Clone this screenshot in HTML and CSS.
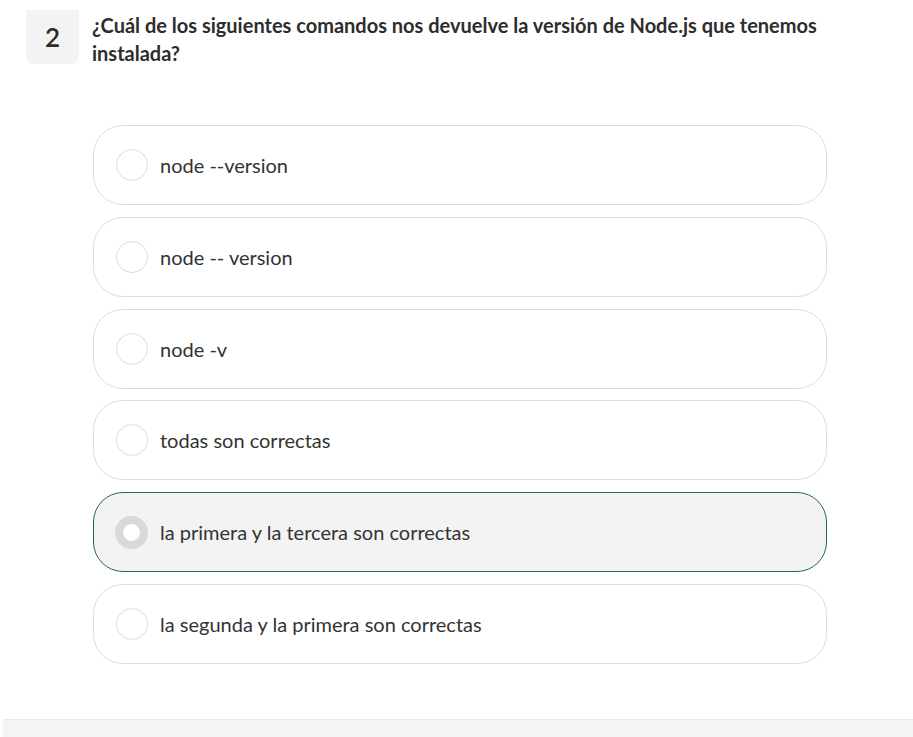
FILE: index.html
```html
<!DOCTYPE html>
<html lang="es">
<head>
<meta charset="utf-8">
<title>Pregunta 2</title>
<link rel="stylesheet" href="styles.css">
</head>
<body>
<div class="question">
  <div class="num">2</div>
  <div class="qtext">¿Cuál de los siguientes comandos nos devuelve la versión de Node.js que tenemos instalada?</div>
</div>
<div class="options">
  <div class="option"><span class="radio"></span><span class="label">node --version</span></div>
  <div class="option"><span class="radio"></span><span class="label">node -- version</span></div>
  <div class="option"><span class="radio"></span><span class="label">node -v</span></div>
  <div class="option"><span class="radio"></span><span class="label">todas son correctas</span></div>
  <div class="option selected"><span class="radio"></span><span class="label">la primera y la tercera son correctas</span></div>
  <div class="option"><span class="radio"></span><span class="label">la segunda y la primera son correctas</span></div>
</div>
<div class="footer-bar"></div>
</body>
</html>
```
FILE: styles.css
```css
html, body {
  margin: 0;
  padding: 0;
  background: #ffffff;
}
body {
  font-family: "Lato", "Noto Sans", "Liberation Sans", sans-serif;
  color: #333333;
  width: 913px;
  height: 737px;
  overflow: hidden;
}
.question {
  display: flex;
  align-items: flex-start;
  padding-left: 26px;
  padding-top: 10px;
}
.num {
  width: 53px;
  height: 54px;
  flex: none;
  background: #f3f3f3;
  border-radius: 0 0 8px 8px;
  display: flex;
  align-items: center;
  justify-content: center;
  font-size: 26px;
  font-weight: 600;
  color: #2b2b2b;
}
.qtext {
  margin-left: 13px;
  width: 750px;
  font-size: 20px;
  font-weight: 700;
  line-height: 28px;
  padding-top: 1px;
  color: #2d2d2d;
}
.options {
  margin-left: 93px;
  margin-top: 58px;
  width: 734px;
  display: flex;
  flex-direction: column;
  gap: 11.8px;
}
.option {
  box-sizing: border-box;
  height: 80px;
  border: 1px solid #dcdcdc;
  border-radius: 30px;
  display: flex;
  align-items: center;
  padding-left: 22px;
  background: #ffffff;
}
.option.selected {
  border-color: #1d6b47;
  background: #f3f3f3;
}
.radio {
  box-sizing: border-box;
  width: 32px;
  height: 32px;
  flex: none;
  border: 1px solid #dcdcdc;
  border-radius: 50%;
  background: #ffffff;
  margin-right: 12px;
}
.option.selected .radio {
  width: 33px;
  height: 33px;
  border: 8px solid #d9d9d9;
  margin-left: -1px;
  margin-right: 12px;
}
.label {
  font-size: 20px;
  color: #333333;
}
.footer-bar {
  margin-top: 55px;
  margin-left: 3px;
  height: 18px;
  background: #f4f4f4;
  border-top: 1px solid #e2f0eb;
}
```
